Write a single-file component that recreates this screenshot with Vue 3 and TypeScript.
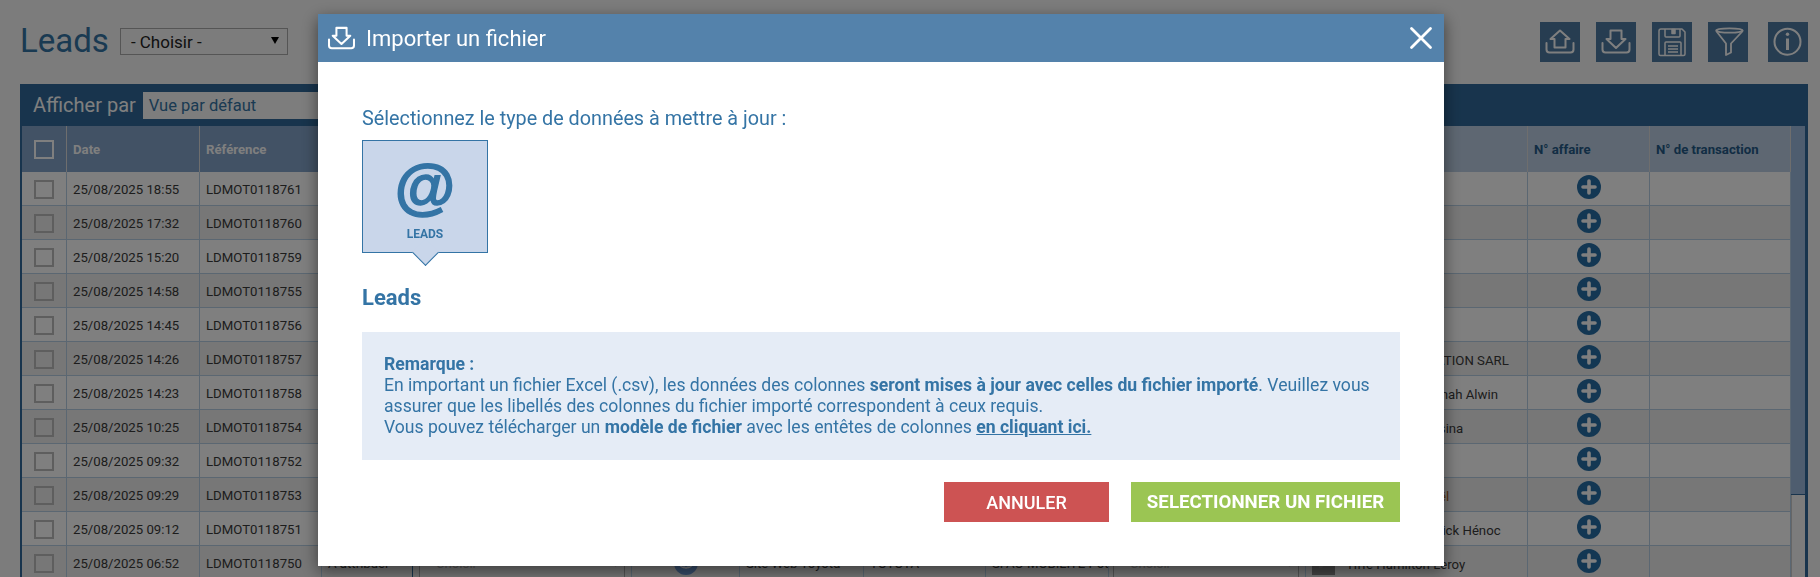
<script setup lang="ts">
interface Lead {
  date: string
  ref: string
  contact: string
  warn?: boolean
}

const leads: Lead[] = [
  { date: '25/08/2025 18:55', ref: 'LDMOT0118761', contact: 'Paul Martin' },
  { date: '25/08/2025 17:32', ref: 'LDMOT0118760', contact: 'Koffi Kona Traori' },
  { date: '25/08/2025 15:20', ref: 'LDMOT0118759', contact: 'Luc Petit' },
  { date: '25/08/2025 14:58', ref: 'LDMOT0118755', contact: 'Anne Roy' },
  { date: '25/08/2025 14:45', ref: 'LDMOT0118756', contact: 'Marc Blanc' },
  { date: '25/08/2025 14:26', ref: 'LDMOT0118757', contact: 'ABC AUTO LOCATION SARL' },
  { date: '25/08/2025 14:23', ref: 'LDMOT0118758', contact: 'Yves B. Rakonomah Alwin' },
  { date: '25/08/2025 10:25', ref: 'LDMOT0118754', contact: 'Claire Rabi Ramsina' },
  { date: '25/08/2025 09:32', ref: 'LDMOT0118752', contact: 'Eric Noel' },
  { date: '25/08/2025 09:29', ref: 'LDMOT0118753', contact: 'Sophie Aline Noël', warn: true },
  { date: '25/08/2025 09:12', ref: 'LDMOT0118751', contact: 'Jean-Mariel Patrick Hénoc' },
  { date: '25/08/2025 06:52', ref: 'LDMOT0118750', contact: 'Tiffe Hamilton Leroy' },
]

const colWidths = [45, 133, 122, 91, 219, 108, 124, 122, 123, 197, 222, 122, 141]
</script>

<template>
  <div class="page">
    <header class="top">
      <div class="top-left">
        <h1>Leads</h1>
        <div class="fake-select">
          <span>- Choisir -</span>
          <i class="caret"></i>
        </div>
      </div>
      <div class="tools">
        <button class="tool">
          <svg viewBox="0 0 40 40" width="40" height="40" fill="none" stroke="#fff" stroke-width="2" stroke-linejoin="round" stroke-linecap="round">
            <path d="M6.5 21v6.5a3 3 0 0 0 3 3h21a3 3 0 0 0 3-3V21" />
            <path d="M20 8.5 10.5 17h4v8.5h11V17h4z" />
          </svg>
        </button>
        <button class="tool">
          <svg viewBox="0 0 40 40" width="40" height="40" fill="none" stroke="#fff" stroke-width="2" stroke-linejoin="round" stroke-linecap="round">
            <path d="M6.5 21v6.5a3 3 0 0 0 3 3h21a3 3 0 0 0 3-3V21" />
            <path d="M14.5 8.5h11V17h4L20 26l-9.5-9h4z" />
          </svg>
        </button>
        <button class="tool">
          <svg viewBox="0 0 40 40" width="40" height="40" fill="none" stroke="#fff" stroke-width="1.5" stroke-linejoin="round">
            <path d="M9 7h21l3 3v22a1.5 1.5 0 0 1-1.5 1.5h-23A1.5 1.5 0 0 1 7 32V9a2 2 0 0 1 2-2z" />
            <path d="M13 7v7a1 1 0 0 0 1 1h13a1 1 0 0 0 1-1V7" />
            <path d="M20 7.5h3v4h-3z" fill="#fff" />
            <path d="M13 33V21a1 1 0 0 1 1-1h14a1 1 0 0 1 1 1v12" />
            <path d="M16 24h10M16 27h10M16 30h10" />
          </svg>
        </button>
        <button class="tool">
          <svg viewBox="0 0 40 40" width="40" height="40" fill="none" stroke="#fff" stroke-width="1.8" stroke-linejoin="round">
            <ellipse cx="21.5" cy="8.5" rx="13.3" ry="2.2" />
            <path d="M8.2 9 18 21.5V33l5-2.5v-9L34.8 9" />
          </svg>
        </button>
        <button class="tool tool-last">
          <svg viewBox="0 0 40 40" width="40" height="40" fill="none" stroke="#fff" stroke-width="2">
            <circle cx="19.5" cy="19.7" r="13" />
            <circle cx="19.5" cy="12.3" r="1.7" fill="#fff" stroke="none" />
            <path d="M19.5 16.5v11.5" stroke-width="3" />
          </svg>
        </button>
      </div>
    </header>

    <section class="panel">
      <div class="panel-bar">
        <span class="bar-label">Afficher par</span>
        <div class="bar-select">Vue par défaut</div>
      </div>
      <div class="panel-body">
        <table class="grid">
          <colgroup>
            <col v-for="(w, i) in colWidths" :key="i" :style="{ width: w + 'px' }" />
          </colgroup>
          <thead>
            <tr>
              <th class="dark center"><span class="check check-head"></span></th>
              <th class="dark">Date</th>
              <th class="dark">Référence</th>
              <th class="dark">Statut</th>
              <th class="dark">Attribué à</th>
              <th class="dark">Marque</th>
              <th class="mid">Source</th>
              <th class="mid">Marque</th>
              <th class="mid">Concession</th>
              <th class="mid">Commercial</th>
              <th class="light">Client</th>
              <th class="light">N° affaire</th>
              <th class="light">N° de transaction</th>
            </tr>
          </thead>
          <tbody>
            <tr v-for="lead in leads" :key="lead.ref">
              <td class="center"><span class="check"></span></td>
              <td>{{ lead.date }}</td>
              <td>{{ lead.ref }}</td>
              <td class="status">A attribuer</td>
              <td class="sel-cell"><div class="cell-select"><span>Choisir</span><b>▾</b></div></td>
              <td class="center logo-cell">
                <svg class="brand" viewBox="0 0 24 24" width="24" height="24">
                  <circle cx="12" cy="12" r="12" fill="#6f9bd6" />
                  <ellipse cx="12" cy="12" rx="7" ry="5" fill="none" stroke="#fff" stroke-width="1.2" />
                  <ellipse cx="12" cy="12" rx="2.5" ry="5" fill="none" stroke="#fff" stroke-width="1" />
                </svg>
              </td>
              <td>Site Web Toyota</td>
              <td>TOYOTA</td>
              <td>SFAO MOBILITÉ Pot</td>
              <td class="sel-cell sel-narrow"><div class="cell-select"><span>Choisir</span><b>▾</b></div></td>
              <td class="person">
                <div class="person-in">
                  <span class="edit">
                    <svg viewBox="0 0 24 24" width="16" height="16" fill="#9a9a9a"><path d="M4 20l1-5L15 5l4 4L9 19z" /></svg>
                  </span>
                  <span class="person-name" :class="{ warn: lead.warn }">{{ lead.contact }}</span>
                </div>
              </td>
              <td class="plus-cell">
                <svg class="plus" viewBox="0 0 24 24" width="24" height="24">
                  <circle cx="12" cy="12" r="12" fill="#276fa6" />
                  <path d="M12 6v12M6 12h12" stroke="#fff" stroke-width="3.6" stroke-linecap="round" />
                </svg>
              </td>
              <td></td>
            </tr>
          </tbody>
        </table>
        <div class="scrollbar"><div class="thumb"></div></div>
      </div>
    </section>

    <div class="overlay">
      <div class="modal">
        <div class="modal-head">
          <div class="modal-title">
            <svg viewBox="0 0 40 40" width="37" height="37" fill="none" stroke="#fff" stroke-width="2.2" stroke-linejoin="round" stroke-linecap="round">
              <path d="M6.5 21v6.5a3 3 0 0 0 3 3h21a3 3 0 0 0 3-3V21" />
              <path d="M14.5 8.5h11V17h4L20 26l-9.5-9h4z" />
            </svg>
            <span>Importer un fichier</span>
          </div>
          <svg class="close" viewBox="0 0 24 24" width="24" height="24" stroke="#fff" stroke-width="2.8" stroke-linecap="round">
            <path d="M2.5 2.5l19 19M21.5 2.5l-19 19" />
          </svg>
        </div>
        <div class="modal-body">
          <p class="pick-label">Sélectionnez le type de données à mettre à jour :</p>
          <div class="type-card">
            <span class="at">@</span>
            <span class="type-name">LEADS</span>
          </div>
          <h2 class="type-title">Leads</h2>
          <div class="note">
            <strong>Remarque :</strong><br />
            En important un fichier Excel (.csv), les données des colonnes <strong>seront mises à jour avec celles du fichier importé</strong>. Veuillez vous assurer que les libellés des colonnes du fichier importé correspondent à ceux requis.<br />
            Vous pouvez télécharger un <strong>modèle de fichier</strong> avec les entêtes de colonnes <a href="#">en cliquant ici.</a>
          </div>
          <div class="actions">
            <button class="btn btn-cancel">ANNULER</button>
            <button class="btn btn-ok">SELECTIONNER UN FICHIER</button>
          </div>
        </div>
      </div>
    </div>
  </div>
</template>

<style>
html,
body {
  margin: 0;
  height: 100%;
  overflow: hidden;
  background: #f8f8f8;
}
</style>

<style scoped>
.page {
  font-family: Roboto, "Liberation Sans", sans-serif;
  height: 577px;
  overflow: hidden;
  color: #3a3a3a;
  box-sizing: border-box;
  padding: 22px 12px 0 20px;
}
.top {
  display: flex;
  justify-content: space-between;
  height: 62px;
}
.top-left {
  display: flex;
  align-items: flex-start;
}
h1 {
  margin: 2px 0 0;
  font-size: 33px;
  line-height: 34px;
  height: 34px;
  font-weight: 400;
  color: #3474a5;
}
.fake-select {
  margin: 6px 0 0 11px;
  width: 168px;
  height: 27px;
  box-sizing: border-box;
  border: 1px solid #aaa;
  display: flex;
  align-items: center;
  justify-content: space-between;
  padding: 0 8px 0 10px;
  font-size: 17px;
  color: #222;
}
.caret {
  border-left: 4px solid transparent;
  border-right: 4px solid transparent;
  border-top: 7px solid #000;
  margin-top: -2px;
}
.tools {
  display: flex;
  gap: 16px;
}
.tool {
  width: 40px;
  height: 40px;
  padding: 0;
  border: 0;
  background: #4f7ba3;
  display: block;
}
.tool-last {
  margin-left: 4px;
}
.panel {
  width: 1788px;
  background: #30699a;
  padding: 0 3px 0 2px;
  box-sizing: border-box;
}
.panel-bar {
  height: 42px;
  display: flex;
  align-items: flex-start;
  padding: 8px 0 0 11px;
  box-sizing: border-box;
}
.bar-label {
  color: #fff;
  font-size: 20px;
  line-height: 27px;
  margin-right: 7px;
}
.bar-select {
  background: #fafafa;
  width: 600px;
  height: 27px;
  line-height: 27px;
  padding-left: 6px;
  box-sizing: border-box;
  font-size: 16.5px;
  color: #3474a5;
}
.panel-body {
  display: flex;
  align-items: flex-start;
}
.grid {
  width: 1769px;
  table-layout: fixed;
  border-collapse: separate;
  border-spacing: 0;
  font-size: 13.2px;
  flex: none;
}
th {
  height: 46px;
  box-sizing: border-box;
  text-align: left;
  font-size: 13.2px;
  font-weight: 700;
  padding: 0 0 0 6px;
  border-right: 1px solid #dcdcdc;
  white-space: nowrap;
  overflow: hidden;
}
th.dark {
  background: #84a4ca;
  color: #fff;
}
th.mid {
  background: #a8c4e4;
  color: #3474a5;
}
th.light {
  background: #bccfe4;
  color: #245a88;
}
th.center {
  padding: 0;
}
td {
  height: 34px;
  box-sizing: border-box;
  padding: 2px 0 0 6px;
  border-right: 1px solid #b6cfe4;
  border-bottom: 1px solid #b6cfe4;
  white-space: nowrap;
  overflow: hidden;
}
tbody tr:nth-child(odd) td {
  background: #ffffff;
}
tbody tr:nth-child(even) td {
  background: #eeeeee;
}
th.center,
td.center {
  text-align: center;
  padding-left: 0;
}
.check {
  display: inline-block;
  width: 20px;
  height: 19px;
  box-sizing: border-box;
  border: 2px solid #bdbdbd;
  vertical-align: middle;
}
.check-head {
  border-color: #fff;
}
td.status {
  border-right-color: #30699a;
}
td.sel-cell {
  padding: 0 6px;
}
td.sel-narrow {
  padding: 0 6px 0 4px;
}
.cell-select {
  height: 33px;
  border-left: 1px solid #aaa;
  border-right: 1px solid #aaa;
  box-sizing: border-box;
  display: flex;
  align-items: center;
  justify-content: space-between;
  padding: 2px 6px 0 16px;
  color: #aaa;
}
.cell-select b {
  font-weight: 400;
  font-size: 10px;
}
.brand,
.plus {
  display: block;
  margin: 0 auto;
}
td.logo-cell {
  padding-top: 0;
}
td.plus-cell {
  padding: 0 0 3px;
}
td.person {
  padding: 0 0 0 6px;
}
.person-in {
  display: flex;
  align-items: center;
  gap: 11px;
}
.edit {
  display: flex;
  align-items: center;
  justify-content: center;
  width: 23px;
  height: 24px;
  flex: none;
  background: #8a8a8a;
}
.person-name {
  padding-top: 3px;
}
.warn {
  color: #b0641a;
}
.scrollbar {
  width: 14px;
  height: 451px;
  background: #f8f8f8;
  flex: none;
  box-sizing: border-box;
  border-left: 1px solid #ccc;
}
.thumb {
  height: 369px;
  margin-left: -1px;
  background: #9cbade;
  border-bottom: 1px solid #30699a;
  box-sizing: border-box;
}
.overlay {
  position: fixed;
  inset: 0;
  background: rgba(0, 0, 0, 0.5);
  padding: 14px 0 0 318px;
  box-sizing: border-box;
  overflow: hidden;
}
.modal {
  width: 1126px;
  height: 552px;
  background: #fff;
  box-shadow: 0 5px 15px rgba(0, 0, 0, 0.5);
}
.modal-head {
  height: 48px;
  background: #5482ab;
  display: flex;
  align-items: center;
  justify-content: space-between;
  padding: 0 11px 0 5px;
}
.modal-title {
  display: flex;
  align-items: center;
  gap: 6px;
  color: #fff;
  font-size: 22px;
}
.close {
  display: block;
}
.modal-body {
  padding: 45px 44px 0;
  color: #3474a5;
}
.pick-label {
  margin: 0 0 9px;
  font-size: 19.8px;
  line-height: 24px;
}
.type-card {
  position: relative;
  width: 126px;
  height: 113px;
  box-sizing: border-box;
  background: #c9d6ea;
  border: 1px solid #3474a5;
  display: flex;
  flex-direction: column;
  align-items: center;
}
.type-card::after {
  content: "";
  position: absolute;
  left: 53px;
  bottom: -10px;
  width: 18px;
  height: 18px;
  background: #c9d6ea;
  border-right: 1px solid #3474a5;
  border-bottom: 1px solid #3474a5;
  transform: rotate(45deg);
}
.at {
  font-family: "Liberation Sans", sans-serif;
  font-weight: 700;
  font-size: 62px;
  line-height: 72px;
  margin-top: 9px;
  height: 77px;
  -webkit-text-stroke: 1.5px #3474a5;
}
.type-name {
  font-size: 12px;
  font-weight: 700;
  line-height: 14px;
}
.type-title {
  margin: 33px 0 22px;
  font-size: 22px;
  line-height: 24px;
  font-weight: 700;
}
.note {
  background: #e5ecf6;
  padding: 22px;
  font-size: 17.6px;
  line-height: 21px;
}
.note a {
  color: inherit;
  font-weight: 700;
}
.actions {
  margin-top: 22px;
  display: flex;
  justify-content: flex-end;
  gap: 22px;
}
.btn {
  height: 40px;
  border: 0;
  padding: 0;
  color: #fff;
  font-family: inherit;
}
.btn-cancel {
  width: 165px;
  background: #cd5353;
  font-size: 18px;
  font-weight: 500;
}
.btn-ok {
  width: 269px;
  background: #9bc553;
  font-size: 18.7px;
  font-weight: 700;
}
</style>
